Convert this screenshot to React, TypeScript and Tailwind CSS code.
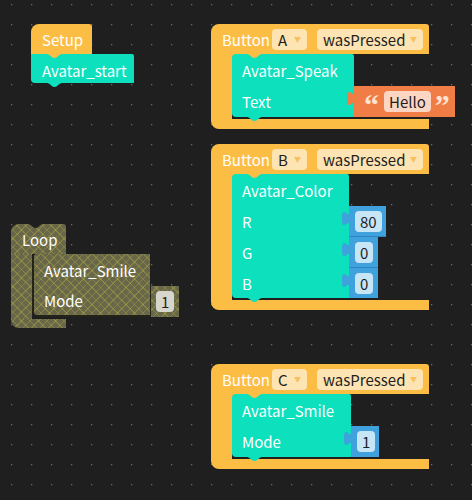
import React from "react";

// block palette
const YEL = "#fcbd44";
const TEAL = "#0ce0bd";

function Notch({ color, className }: { color: string; className: string }) {
  return (
    <svg width="15" height="4" viewBox="0 0 15 4" className={`absolute ${className}`}>
      <path d="M0 0 C3 0 4.5 4 7.5 4 C10.5 4 12 0 15 0 Z" fill={color} />
    </svg>
  );
}

function Tab({ color }: { color: string }) {
  return (
    <svg width="8" height="15" viewBox="0 0 8 15" overflow="visible" className="absolute -left-[7px] top-[5px]">
      <path d="M8 0 C8 10 0 -8 0 7.5 S8 5 8 15 Z" fill={color} />
    </svg>
  );
}

function Drop({ label, w }: { label: string; w: string }) {
  return (
    <span className={`flex h-[21px] ${w} items-center justify-between rounded-[4px] bg-[#fde4b2] pl-[6px] pr-[6px] text-[#1f1f1f]`}>
      {label}
      <span className="text-[7px] text-[#f6c060]">▼</span>
    </span>
  );
}

function NumBlock({ value, w, last }: { value: string; w: string; last?: boolean }) {
  return (
    <div
      className={`absolute left-full top-0 flex h-full ${w} items-center bg-[#3fa2dc] pl-[6px] ${
        last ? "" : "border-b border-[#2e84bb]"
      }`}
    >
      <Tab color="#3fa2dc" />
      <span className="flex h-[21px] items-center rounded-[4px] bg-[#c6e5f7] px-[5px] leading-none text-[#1f1f1f]">
        {value}
      </span>
    </div>
  );
}

function Row({ label, h, children }: { label: string; h: string; children?: React.ReactNode }) {
  return (
    <div className={`relative flex ${h} items-center pl-[10px] leading-none`}>
      {label}
      {children}
    </div>
  );
}

function EventBlock({ top, btn, children }: { top: string; btn: string; children: React.ReactNode }) {
  return (
    <div className={`absolute left-[211px] ${top} flex w-[218px] flex-col text-white`}>
      <div className="flex h-[30px] items-center rounded-tl-[8px] rounded-tr-[3px] bg-[#fcbd44] pl-[11px] leading-none">
        <span className="w-[50px]">Button</span>
        <Drop label={btn} w="w-[35px]" />
        <span className="ml-[10px]">
          <Drop label="wasPressed" w="w-[106px]" />
        </span>
      </div>
      <div className="flex">
        <div className="w-[21px] shrink-0 bg-[#fcbd44]" />
        <div className="relative flex flex-col pb-[2px]">
          <div className="absolute left-0 top-0 h-[6px] w-[6px] bg-[#fcbd44]" />
          {children}
        </div>
      </div>
      <div className="h-[10px] rounded-bl-[8px] bg-[#fcbd44]" />
    </div>
  );
}

function TealBlock({ w, children }: { w: string; children: React.ReactNode }) {
  return (
    <div className={`relative ${w} rounded-l-[4px] rounded-tr-[2px] bg-[#0ce0bd]`}>
      <Notch color={YEL} className="left-[15px] top-0" />
      <Notch color={TEAL} className="-bottom-[4px] left-[15px]" />
      {children}
    </div>
  );
}

const hatch =
  "bg-[#68674a] bg-[image:repeating-linear-gradient(45deg,rgba(214,210,60,0.25)_0_1px,transparent_1px_6px),repeating-linear-gradient(-45deg,rgba(214,210,60,0.25)_0_1px,transparent_1px_6px)]";

export default function App() {
  return (
    <div className="relative h-[500px] w-[472px] overflow-hidden bg-[#1f1f1f] font-['Noto_Sans_CJK_JP','Noto_Sans',sans-serif] text-[15px]">
      <svg className="absolute inset-0" width="472" height="500">
        <defs>
          <pattern id="dots" x="11" y="4" width="20" height="20" patternUnits="userSpaceOnUse">
            <rect x="0" y="0" width="1.3" height="1.3" fill="#6a6a6a" />
          </pattern>
        </defs>
        <rect width="472" height="500" fill="url(#dots)" />
      </svg>

      {/* Setup */}
      <div className="absolute left-[31px] top-[24px] text-white">
        <div className="flex h-[30px] w-[61px] items-center rounded-tl-[8px] rounded-tr-[3px] bg-[#fcbd44] pl-[11px] leading-none">
          Setup
        </div>
        <div className="relative flex h-[29px] w-[103px] items-center rounded-bl-[4px] rounded-tr-[2px] bg-[#0ce0bd] pl-[11px] pt-[3px] leading-none">
          <Notch color={YEL} className="left-[16px] top-0" />
          <Notch color={TEAL} className="-bottom-[4px] left-[16px]" />
          Avatar_start
        </div>
      </div>

      {/* Button A */}
      <EventBlock top="top-[24px]" btn="A">
        <TealBlock w="w-[122px]">
          <Row label="Avatar_Speak" h="h-[32px]" />
          <Row label="Text" h="h-[31px]">
            <div className="absolute left-full top-0 flex h-full w-[101px] items-center bg-[#ef7d45] pl-[10px]">
              <Tab color="#ef7d45" />
              <span className="mt-[6px] font-['Liberation_Serif',serif] text-[30px] font-bold leading-none text-[#fde2d2]">“</span>
              <span className="ml-[5px] flex h-[21px] items-center rounded-[4px] bg-[#fcd6c2] px-[5px] leading-none text-[#1f1f1f]">
                Hello
              </span>
              <span className="ml-[4px] mt-[6px] font-['Liberation_Serif',serif] text-[30px] font-bold leading-none text-[#fde2d2]">”</span>
            </div>
          </Row>
        </TealBlock>
      </EventBlock>

      {/* Button B */}
      <EventBlock top="top-[144px]" btn="B">
        <TealBlock w="w-[117px]">
          <Row label="Avatar_Color" h="h-[32px]" />
          <Row label="R" h="h-[31px]">
            <NumBlock value="80" w="w-[37px]" />
          </Row>
          <Row label="G" h="h-[31px]">
            <NumBlock value="0" w="w-[29px]" />
          </Row>
          <Row label="B" h="h-[30px]">
            <NumBlock value="0" w="w-[29px]" last />
          </Row>
        </TealBlock>
      </EventBlock>

      {/* Loop (disabled) */}
      <div className="absolute left-[11px] top-[224px] flex flex-col text-white">
        <div className={`relative flex h-[30px] w-[55px] items-center rounded-tl-[8px] rounded-tr-[3px] pl-[11px] leading-none ${hatch}`}>
          <Notch color="#1f1f1f" className="left-[17px] top-0" />
          Loop
        </div>
        <div className="flex">
          <div className={`w-[21px] shrink-0 ${hatch}`} />
          <div className="relative flex flex-col pb-[2px]">
            <div className="relative w-[118px] rounded-l-[5px] border-b-2 border-l-2 border-[#23231a]">
              <div className={`absolute inset-0 rounded-l-[3px] ${hatch}`} />
              <div className="relative">
                <Row label="Avatar_Smile" h="h-[32px]" />
                <Row label="Mode" h="h-[29px]">
                  <div className={`absolute left-full top-0 flex h-[31px] w-[29px] items-center border-l border-[#23231a] pl-[5px] ${hatch}`}>
                    <span className="flex h-[21px] items-center rounded-[4px] bg-[#d6d6cc] px-[5px] leading-none text-[#1f1f1f]">
                      1
                    </span>
                  </div>
                </Row>
              </div>
            </div>
          </div>
        </div>
        <div className={`h-[9px] w-[55px] rounded-bl-[8px] ${hatch}`} />
      </div>

      {/* Button C */}
      <EventBlock top="top-[364px]" btn="C">
        <TealBlock w="w-[119px]">
          <Row label="Avatar_Smile" h="h-[32px]" />
          <Row label="Mode" h="h-[31px]">
            <NumBlock value="1" w="w-[28px]" last />
          </Row>
        </TealBlock>
      </EventBlock>
    </div>
  );
}
